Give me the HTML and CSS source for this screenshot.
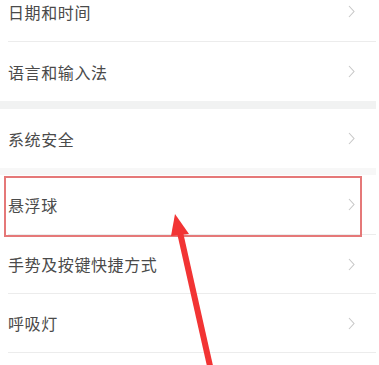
FILE: index.html
```html
<!DOCTYPE html>
<html lang="zh-CN">
<head>
<meta charset="utf-8">
<link rel="stylesheet" href="styles.css">
</head>
<body>
<div class="page">
  <div class="list">
    <div class="row"><span class="label">日期和时间</span><svg class="chev" viewBox="0 0 7 13"><polyline points="1,1 6,6.5 1,12"/></svg></div>
    <div class="divider"></div>
    <div class="row"><span class="label">语言和输入法</span><svg class="chev" viewBox="0 0 7 13"><polyline points="1,1 6,6.5 1,12"/></svg></div>
  </div>
  <div class="band"></div>
  <div class="list">
    <div class="row"><span class="label">系统安全</span><svg class="chev" viewBox="0 0 7 13"><polyline points="1,1 6,6.5 1,12"/></svg></div>
    <div class="soft"></div>
    <div class="row row-hl"><span class="label">悬浮球</span><svg class="chev" viewBox="0 0 7 13"><polyline points="1,1 6,6.5 1,12"/></svg><div class="hl-box"></div></div>
    <div class="divider"></div>
    <div class="row row-short"><span class="label">手势及按键快捷方式</span><svg class="chev" viewBox="0 0 7 13"><polyline points="1,1 6,6.5 1,12"/></svg></div>
    <div class="divider"></div>
    <div class="row row-short"><span class="label">呼吸灯</span><svg class="chev" viewBox="0 0 7 13"><polyline points="1,1 6,6.5 1,12"/></svg></div>
    <div class="divider"></div>
  </div>
  <svg class="arrow" viewBox="0 0 379 365" width="379" height="365">
    <line x1="179" y1="228" x2="210" y2="366" />
    <polygon points="175,214 189,234 171,236" />
  </svg>
</div>
</body>
</html>
```

FILE: styles.css
```css
html, body {
  margin: 0;
  padding: 0;
  background: #ffffff;
}
.page {
  position: relative;
  width: 379px;
  height: 365px;
  overflow: hidden;
}
.list {
  display: flex;
  flex-direction: column;
  width: 376px;
}
.list:first-child {
  margin-top: -18px;
}
.row {
  position: relative;
  height: 59px;
  flex: none;
  display: flex;
  align-items: center;
  justify-content: space-between;
  padding: 0 21px 0 8px;
  font-family: "Noto Sans CJK SC", "Noto Sans", sans-serif;
  font-size: 16px;
  letter-spacing: 0.6px;
  color: #4a4a4a;
}
.row-short {
  height: 58px;
}
.label {
  line-height: 1;
}
.chev {
  width: 7px;
  height: 13px;
  fill: none;
  stroke: #c8c8c8;
  stroke-width: 1.1;
}
.divider {
  height: 1px;
  flex: none;
  margin-left: 8px;
  background: #ececec;
}
.soft {
  height: 7px;
  flex: none;
  background: #f7f7f7;
}
.band {
  height: 8px;
  width: 376px;
  background: #f1f2f2;
}
.hl-box {
  position: absolute;
  left: 4px;
  right: 14px;
  top: 1px;
  bottom: -3px;
  border: 2px solid #e57878;
}
.arrow {
  position: absolute;
  left: 0;
  top: 0;
}
.arrow line {
  stroke: #f23434;
  stroke-width: 6;
}
.arrow polygon {
  fill: #f23434;
}
```
